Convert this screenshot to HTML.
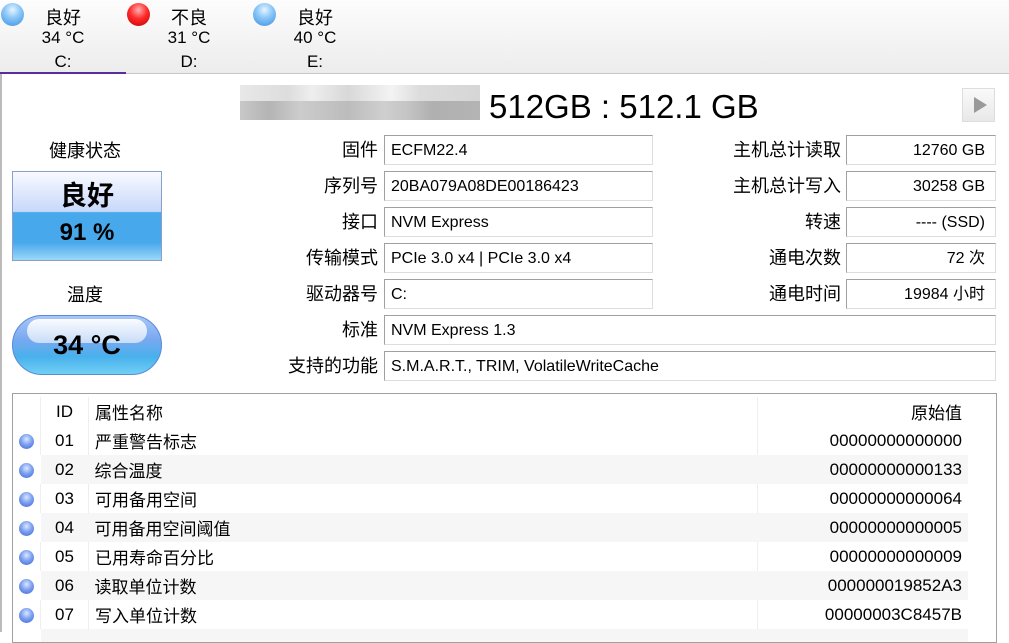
<!DOCTYPE html>
<html><head><meta charset="utf-8"><style>
*{margin:0;padding:0;box-sizing:border-box}
body{width:1009px;height:632px;overflow:hidden;background:#fff;font-family:"Liberation Sans","Noto Sans CJK SC",sans-serif;color:#000;position:relative}
.abs{position:absolute}
.tabbar{left:0;top:0;width:1009px;height:74px;background:linear-gradient(#fdfdfd,#ececec);border-bottom:1px solid #c8c8c8}
.tab{position:absolute;top:0;width:126px;height:73px;text-align:center;font-size:17px;line-height:20px}
.ball{position:absolute;width:23px;height:23px;border-radius:50%;top:3px}
.blue{background:radial-gradient(circle at 50% 30%,#e8f4ff 0,#8cc8f8 40%,#3a8ee0 100%)}
.red{background:radial-gradient(circle at 50% 30%,#ffb0b0 0,#ff2a2a 45%,#c00000 100%)}
.lbl{position:absolute;text-align:right;font-size:18px;line-height:30px}
.box{position:absolute;height:30px;border:1px solid #ddd;border-top-color:#a0a0a0;border-left-color:#a0a0a0;font-size:16px;line-height:30px;padding:0 6px;background:#fff}
.r{text-align:right;padding-right:10px}
table{border-collapse:collapse;font-size:17px}
td{height:29px;padding:0 6px;white-space:nowrap}
.dot{display:inline-block;width:15px;height:15px;border-radius:50%;background:radial-gradient(circle at 50% 35%,#d8e8ff 0,#7fa0f0 45%,#3a66d8 100%);vertical-align:middle}
</style></head><body>
<div class="abs tabbar"></div>
<div class="tab" style="left:0"><div class="ball blue" style="left:1px"></div><div style="margin-top:8px;font-size:18px">良好</div><div>34 °C</div><div style="margin-top:4px">C:</div></div>
<div class="abs" style="left:0;top:72px;width:126px;height:2px;background:#5a2d9c"></div>
<div class="tab" style="left:126px"><div class="ball red" style="left:1px"></div><div style="margin-top:8px;font-size:18px">不良</div><div>31 °C</div><div style="margin-top:4px">D:</div></div>
<div class="tab" style="left:252px"><div class="ball blue" style="left:1px"></div><div style="margin-top:8px;font-size:18px">良好</div><div>40 °C</div><div style="margin-top:4px">E:</div></div>
<div class="abs" style="left:0;top:74px;width:2px;height:558px;background:#bbb"></div>

<div class="abs" style="left:240px;top:85px;width:240px;height:16px;background:linear-gradient(90deg,#e8e8e8 0,#ddd 20%,#eee 30%,#d8d8d8 45%,#f3f3f3 63%,#dcdcdc 75%,#d6d6d6 100%)"></div>
<div class="abs" style="left:240px;top:101px;width:240px;height:19px;background:linear-gradient(90deg,#c8c8c8 0,#b4b4b4 12%,#ccc 25%,#bcbcbc 45%,#cfcfcf 60%,#c4c4c4 70%,#b0b0b0 80%,#b4b4b4 100%)"></div>
<div class="abs" style="left:489px;top:85px;font-size:33px;line-height:44px">512GB : 512.1 GB</div>
<div class="abs" style="left:962px;top:88px;width:33px;height:34px;border:1px solid #ddd;background:linear-gradient(#fafafa,#e8e8e8)"><div style="position:absolute;left:11px;top:8px;border-left:13px solid #999;border-top:8px solid transparent;border-bottom:8px solid transparent"></div></div>

<div class="abs" style="left:0;top:137px;width:170px;text-align:center;font-size:18px">健康状态</div>
<div class="abs" style="left:12px;top:171px;width:150px;height:90px;border:1px solid #8aa0c8;background:linear-gradient(#f8faff 0,#c8d8fa 45%,#48a8ec 46%,#48a8ec 80%,#9ad8f8 100%);text-align:center;font-weight:bold">
<div style="font-size:27px;line-height:40px;margin-top:4px">良好</div><div style="font-size:24px;line-height:34px">91 %</div></div>
<div class="abs" style="left:0;top:281px;width:170px;text-align:center;font-size:18px">温度</div>
<div class="abs" style="left:12px;top:315px;width:150px;height:60px;border-radius:30px;border:1px solid #5a8ad8;background:linear-gradient(#a8c8f8 0,#7aa8f0 40%,#48b0ec 70%,#70d0f4 100%);text-align:center;font-weight:bold;font-size:27px;line-height:58px">
<div class="abs" style="left:14px;top:3px;width:120px;height:24px;border-radius:14px;background:linear-gradient(#fafcff,#c8dcf8)"></div><span style="position:relative">34 °C</span></div>

<div class="lbl" style="right:631px;top:135px">固件</div><div class="box" style="left:384px;top:135px;width:269px">ECFM22.4</div>
<div class="lbl" style="right:631px;top:171px">序列号</div><div class="box" style="left:384px;top:171px;width:269px">20BA079A08DE00186423</div>
<div class="lbl" style="right:631px;top:207px">接口</div><div class="box" style="left:384px;top:207px;width:269px">NVM Express</div>
<div class="lbl" style="right:631px;top:243px">传输模式</div><div class="box" style="left:384px;top:243px;width:269px">PCIe 3.0 x4 | PCIe 3.0 x4</div>
<div class="lbl" style="right:631px;top:279px">驱动器号</div><div class="box" style="left:384px;top:279px;width:269px">C:</div>
<div class="lbl" style="right:631px;top:315px">标准</div><div class="box" style="left:384px;top:315px;width:612px">NVM Express 1.3</div>
<div class="lbl" style="right:631px;top:351px">支持的功能</div><div class="box" style="left:384px;top:351px;width:612px">S.M.A.R.T., TRIM, VolatileWriteCache</div>

<div class="lbl" style="right:168px;top:135px">主机总计读取</div><div class="box r" style="left:846px;top:135px;width:150px">12760 GB</div>
<div class="lbl" style="right:168px;top:171px">主机总计写入</div><div class="box r" style="left:846px;top:171px;width:150px">30258 GB</div>
<div class="lbl" style="right:168px;top:207px">转速</div><div class="box r" style="left:846px;top:207px;width:150px">---- (SSD)</div>
<div class="lbl" style="right:168px;top:243px">通电次数</div><div class="box r" style="left:846px;top:243px;width:150px">72 次</div>
<div class="lbl" style="right:168px;top:279px">通电时间</div><div class="box r" style="left:846px;top:279px;width:150px">19984 小时</div>

<div class="abs" style="left:12px;top:393px;width:985px;height:250px;border:1px solid #a0a0a0;overflow:hidden">
<table style="width:955px;margin-top:3px">
<colgroup><col style="width:26px"><col style="width:48px"><col style="width:670px"><col style="width:211px"></colgroup>
<tr><td></td><td style="border-left:1px solid #eee;text-align:center">ID</td><td style="border-left:1px solid #eee">属性名称</td><td style="border-left:1px solid #eee;text-align:right">原始值</td></tr>
<tr><td><span class="dot"></span></td><td style="border-left:1px solid #eee;text-align:center">01</td><td style="border-left:1px solid #eee">严重警告标志</td><td style="border-left:1px solid #eee;text-align:right">00000000000000</td></tr>
<tr style="background:#f6f6f6"><td style="background:#fff"><span class="dot"></span></td><td style="text-align:center">02</td><td>综合温度</td><td style="text-align:right">00000000000133</td></tr>
<tr><td><span class="dot"></span></td><td style="border-left:1px solid #eee;text-align:center">03</td><td style="border-left:1px solid #eee">可用备用空间</td><td style="border-left:1px solid #eee;text-align:right">00000000000064</td></tr>
<tr style="background:#f6f6f6"><td style="background:#fff"><span class="dot"></span></td><td style="text-align:center">04</td><td>可用备用空间阈值</td><td style="text-align:right">00000000000005</td></tr>
<tr><td><span class="dot"></span></td><td style="border-left:1px solid #eee;text-align:center">05</td><td style="border-left:1px solid #eee">已用寿命百分比</td><td style="border-left:1px solid #eee;text-align:right">00000000000009</td></tr>
<tr style="background:#f6f6f6"><td style="background:#fff"><span class="dot"></span></td><td style="text-align:center">06</td><td>读取单位计数</td><td style="text-align:right">000000019852A3</td></tr>
<tr><td><span class="dot"></span></td><td style="border-left:1px solid #eee;text-align:center">07</td><td style="border-left:1px solid #eee">写入单位计数</td><td style="border-left:1px solid #eee;text-align:right">00000003C8457B</td></tr>
<tr style="background:#f6f6f6"><td style="background:#fff"></td><td></td><td></td><td></td></tr>
</table></div>
</body></html>
